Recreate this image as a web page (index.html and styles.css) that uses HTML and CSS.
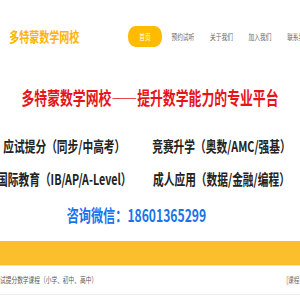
FILE: index.html
```html
<!DOCTYPE html>
<html lang="zh-CN">
<head>
    <meta charset="UTF-8">
    <meta name="viewport" content="width=device-width, initial-scale=1.0">
    <title>多特蒙数学网校</title>
    <link rel="stylesheet" href="styles.css">
</head>
<body>
<div class="page">
    <header class="header">
        <div class="logo">多特蒙数学网校</div>
        <nav class="nav">
            <a class="nav-item active" href="#">首页</a>
            <a class="nav-item" href="#">预约试听</a>
            <a class="nav-item" href="#">关于我们</a>
            <a class="nav-item" href="#">加入我们</a>
            <a class="nav-item" href="#">联系我们</a>
        </nav>
    </header>

    <section class="intro">
        <h1 class="slogan">多特蒙数学网校——提升数学能力的专业平台</h1>
        <div class="features">
            <div>应试提分（同步/中高考）</div>
            <div>竞赛升学（奥数/AMC/强基）</div>
            <div>国际教育（IB/AP/A-Level）</div>
            <div>成人应用（数据/金融/编程）</div>
        </div>
        <p class="contact">咨询微信：18601365299</p>
    </section>

    <section class="courses">
        <div class="course-box">
            <div class="course-title">课程介绍</div>
            <ul class="course-list">
                <li>
                    <span>应试提分数学课程（小学、初中、高中）</span>
                    <span class="more">[课程详情]</span>
                </li>
            </ul>
        </div>
    </section>
</div>
</body>
</html>
```

FILE: styles.css
```css
html,
body {
    margin: 0;
    padding: 0;
    overflow: hidden;
}

body {
    font-family: "Noto Sans CJK SC", "Noto Sans", sans-serif;
    background-color: #fff;
}

/* the page is drawn narrow, like the original */
.page {
    width: 420px;
    transform: scaleX(0.7143);
    transform-origin: 0 0;
}

.header {
    display: flex;
    align-items: center;
    height: 72px;
    padding-left: 13px;
    white-space: nowrap;
}

.logo {
    width: 166px;
    flex: none;
    font-size: 14px;
    font-weight: bold;
    color: #ffb400;
}

.nav {
    display: flex;
    align-items: center;
    gap: 4px;
}

.nav-item {
    padding: 0 9px;
    font-size: 8px;
    line-height: 21px;
    color: #666;
    text-decoration: none;
}

.nav-item.active {
    padding: 0 16px;
    background-color: #ffbb00;
    color: #fff;
    border-radius: 11px;
}

.slogan {
    margin: 13px 0 0;
    font-size: 18px;
    line-height: 24px;
    font-weight: bold;
    color: #e6141b;
    text-align: center;
    white-space: nowrap;
}

.features {
    display: grid;
    grid-template-columns: 220px 220px;
    justify-content: center;
    justify-items: center;
    margin-top: 20px;
    padding-right: 20px;
    font-size: 15px;
    font-weight: bold;
    line-height: 33px;
    color: #222;
    white-space: nowrap;
}

.contact {
    margin: 8px 0 0;
    padding-right: 38px;
    font-size: 17px;
    font-weight: bold;
    line-height: 24px;
    color: #1a73e8;
    text-align: center;
}

.courses {
    display: flex;
    justify-content: center;
    margin-top: 14px;
}

.course-box {
    flex: none;
    width: 500px;
}

.course-title {
    height: 24px;
    padding-left: 0;
    background-color: #fbbf2d;
    border-bottom: 1px solid #fde3a0;
    font-size: 10px;
    font-weight: bold;
    line-height: 24px;
    color: #333;
}

.course-list {
    list-style: none;
    margin: 0;
    padding: 0;
}

.course-list li {
    display: flex;
    justify-content: space-between;
    padding: 0 22px 0 32px;
    height: 28px;
    font-size: 8px;
    line-height: 28px;
    color: #555;
    border-bottom: 1px solid #eee;
}

.course-list .more {
    color: #666;
}
```
